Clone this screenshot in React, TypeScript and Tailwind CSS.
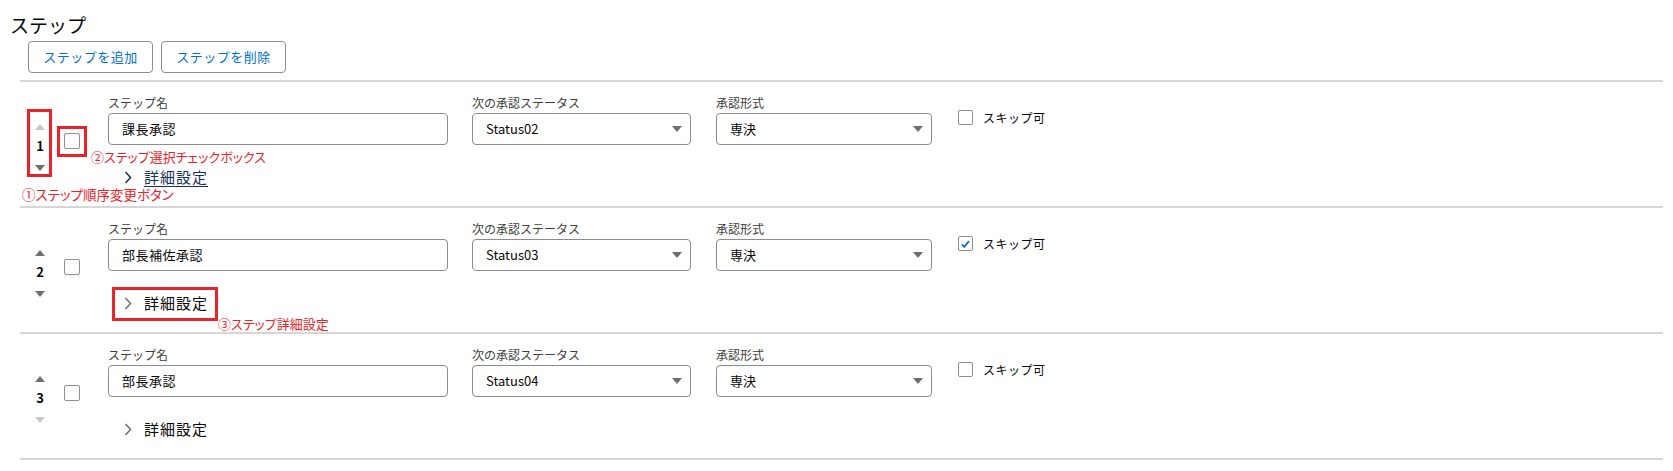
type Step = {
  no: number;
  name: string;
  status: string;
  form: string;
  skip: boolean;
  upDisabled: boolean;
  downDisabled: boolean;
  linkStyle: boolean;
};

const STEPS: Step[] = [
  { no: 1, name: "課長承認", status: "Status02", form: "専決", skip: false, upDisabled: true, downDisabled: false, linkStyle: true },
  { no: 2, name: "部長補佐承認", status: "Status03", form: "専決", skip: true, upDisabled: false, downDisabled: false, linkStyle: false },
  { no: 3, name: "部長承認", status: "Status04", form: "専決", skip: false, upDisabled: false, downDisabled: true, linkStyle: false },
];

function Triangle({ up, className }: { up?: boolean; className: string }) {
  return (
    <svg width="10" height="6" viewBox="0 0 10 6" className={className}>
      <path d={up ? "M0 6h10L5 0z" : "M0 0h10L5 6z"} fill="currentColor" />
    </svg>
  );
}

function Field({ label, children }: { label: string; children: React.ReactNode }) {
  return (
    <div className="flex flex-col">
      <span className="h-[16px] text-[12px] leading-[16px] text-[#3e3e3c]">{label}</span>
      <div className="mt-[2px]">{children}</div>
    </div>
  );
}

function SelectBox({ value, width }: { value: string; width: string }) {
  return (
    <div className={`flex h-[32px] items-center justify-between rounded-[4px] border border-[#8c8c8c] bg-white pl-[13px] pr-[8px] ${width}`}>
      <span className="text-[13px] text-[#080707]">{value}</span>
      <Triangle className="text-[#706e6b]" />
    </div>
  );
}

function StepRow({ step, index }: { step: Step; index: number }) {
  return (
    <div className="relative flex h-[126px] items-start border-t-2 border-[#d6d6d6]">
      <div className="flex w-[40px] flex-col items-center pt-[42px]">
        <Triangle up className={step.upDisabled ? "text-[#c9c7c5]" : "text-[#706e6b]"} />
        <span className="mt-[8px] h-[16px] text-[13px] font-bold leading-[16px] text-[#080707]">{step.no}</span>
        <Triangle className={`mt-[11px] ${step.downDisabled ? "text-[#c9c7c5]" : "text-[#706e6b]"}`} />
      </div>
      <div className="ml-[4px] mt-[51px] h-[16px] w-[16px] rounded-[2px] border border-[#8f8f8f] bg-white" />
      <div className="ml-[28px] flex flex-col pt-[13px]">
        <div className="flex items-start">
          <Field label="ステップ名">
            <div className="flex h-[32px] w-[340px] items-center rounded-[4px] border border-[#8c8c8c] bg-white pl-[13px]">
              <span className="text-[13px] tracking-[0.5px] text-[#080707]">{step.name}</span>
            </div>
          </Field>
          <div className="ml-[24px]">
            <Field label="次の承認ステータス">
              <SelectBox value={step.status} width="w-[219px]" />
            </Field>
          </div>
          <div className="ml-[25px]">
            <Field label="承認形式">
              <SelectBox value={step.form} width="w-[216px]" />
            </Field>
          </div>
          <div className="ml-[26px] mt-[14px] flex h-[17px] items-center">
            <div className="flex h-[15px] w-[15px] items-center justify-center rounded-[2px] border border-[#8f8f8f] bg-white">
              {step.skip && (
                <svg width="9" height="8" viewBox="0 0 9 8">
                  <path d="M1 4.5l2.3 2.3L8 1.2" fill="none" stroke="#0070d2" strokeWidth="1.8" />
                </svg>
              )}
            </div>
            <span className="ml-[10px] text-[12px] leading-[17px] tracking-[0.5px] text-[#080707]">スキップ可</span>
          </div>
        </div>
        <div className="mt-[22px] flex h-[20px] items-center pl-[16px]">
          <svg width="8" height="13" viewBox="0 0 8 13" className={step.linkStyle ? "text-[#16325c]" : "text-[#706e6b]"}>
            <path d="M1.5 1l5 5.5-5 5.5" fill="none" stroke="currentColor" strokeWidth="1.5" />
          </svg>
          <span
            className={`ml-[12px] text-[15px] leading-[20px] tracking-[1px] ${
              step.linkStyle ? "text-[#16325c] underline underline-offset-[3px]" : "text-[#080707]"
            }`}
          >
            詳細設定
          </span>
        </div>
      </div>

      {index === 0 && (
        <>
          <div className="absolute left-[7px] top-[27px] h-[68px] w-[25px] border-[3px] border-[#e8232a]" />
          <div className="absolute left-[37px] top-[44px] h-[31px] w-[30px] border-[3px] border-[#e8232a]" />
          <span className="absolute left-[71px] top-[67px] text-[13px] leading-[16px] text-[#e8232a] [font-feature-settings:'palt']">
            ②ステップ選択チェックボックス
          </span>
          <span className="absolute left-[2px] top-[104px] text-[13.5px] leading-[16px] text-[#e8232a] [font-feature-settings:'palt']">
            ①ステップ順序変更ボタン
          </span>
        </>
      )}
      {index === 1 && (
        <>
          <div className="absolute left-[92px] top-[79px] h-[34px] w-[106px] border-[3px] border-[#e8232a]" />
          <span className="absolute left-[198px] top-[108px] text-[13px] leading-[16px] text-[#e8232a] [font-feature-settings:'palt']">
            ③ステップ詳細設定
          </span>
        </>
      )}
    </div>
  );
}

export default function App() {
  return (
    <div className="min-h-[471px] bg-white px-[10px] pt-[13px] font-['Noto_Sans_CJK_JP','Noto_Sans',sans-serif]">
      <h2 className="text-[19px] leading-[24px] text-[#080707]">ステップ</h2>
      <div className="ml-[18px] mt-[4px] flex gap-[8px]">
        <button type="button" className="h-[32px] w-[125px] rounded-[4px] border border-[#8c8c8c] bg-white text-[13px] tracking-[0.5px] text-[#0070d2]">
          ステップを追加
        </button>
        <button type="button" className="h-[32px] w-[125px] rounded-[4px] border border-[#8c8c8c] bg-white text-[13px] tracking-[0.5px] text-[#0070d2]">
          ステップを削除
        </button>
      </div>
      <div className="ml-[10px] mt-[7px]">
        {STEPS.map((step, i) => (
          <StepRow key={step.no} step={step} index={i} />
        ))}
        <div className="border-t-2 border-[#d6d6d6]" />
      </div>
    </div>
  );
}
